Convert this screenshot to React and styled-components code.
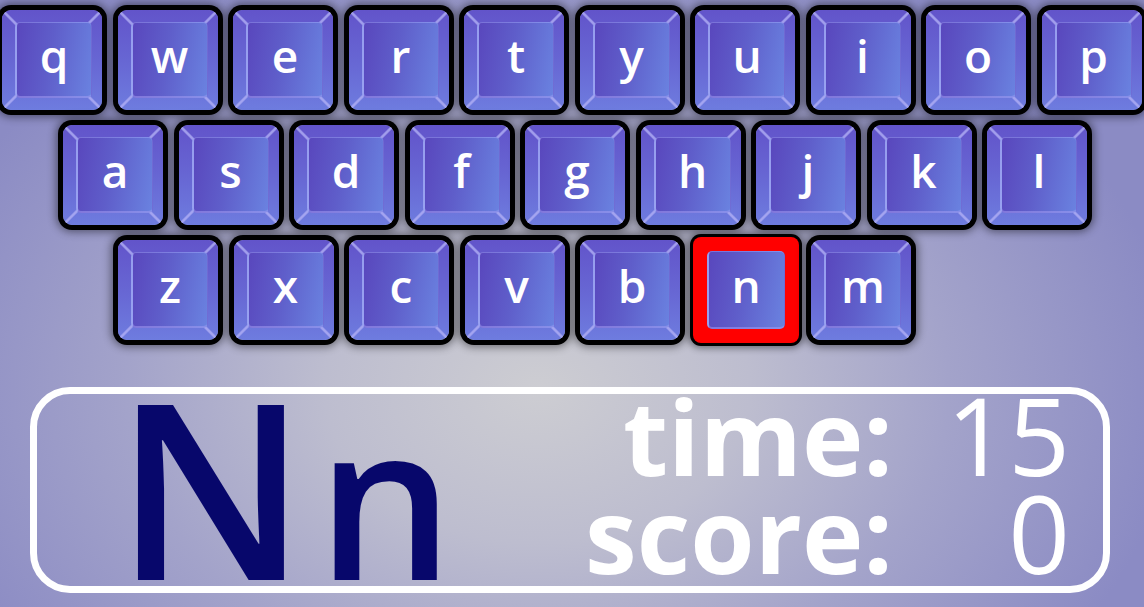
import styled, { createGlobalStyle } from "styled-components"

const GlobalStyle = createGlobalStyle`
    html, body {
        margin: 0;
        padding: 0;
    }
    body {
        width: 1144px;
        height: 607px;
        overflow: hidden;
        font-family: "Open Sans", "DejaVu Sans", sans-serif;
        background: radial-gradient(ellipse 62% 85% at 47% 64%, #cdcdd2 0%, #bdbdcf 30%, #a3a3ca 58%, #8b8bc4 90%);
    }
`

const rows = [
    { offset: 2, keys: ["q", "w", "e", "r", "t", "y", "u", "i", "o", "p"] },
    { offset: 63, keys: ["a", "s", "d", "f", "g", "h", "j", "k", "l"] },
    { offset: 118, keys: ["z", "x", "c", "v", "b", "n", "m"] },
]

const target = "n"

const App = () => {
    return (
        <Page>
            <GlobalStyle />
            <Keyboard>
                {rows.map((row, i) => (
                    <KeyRow key={i} $offset={row.offset}>
                        {row.keys.map(k => (
                            <Key key={k} $selected={k === target}>
                                <KeyFace>{k}</KeyFace>
                            </Key>
                        ))}
                    </KeyRow>
                ))}
            </Keyboard>
            <Panel>
                <BigLetters>
                    N<Small>n</Small>
                </BigLetters>
                <Stats>
                    <StatRow>
                        <Label>time:</Label>
                        <Value>15</Value>
                    </StatRow>
                    <StatRow>
                        <Label>score:</Label>
                        <Value>0</Value>
                    </StatRow>
                </Stats>
            </Panel>
        </Page>
    )
}

export default App

const Page = styled.div`
    width: 1144px;
    height: 607px;
    display: flex;
    flex-direction: column;
    overflow: hidden;
`

const Keyboard = styled.div`
    padding-top: 10px;
    display: flex;
    flex-direction: column;
    gap: 15px;
`

const KeyRow = styled.div`
    display: flex;
    gap: 15.5px;
    padding-left: ${p => p.$offset}px;
`

const diagonal = (deg) =>
    `linear-gradient(${deg}deg, transparent 48.6%, rgba(178, 176, 245, 0.8) 49.6%, rgba(178, 176, 245, 0.8) 50.4%, transparent 51.4%)`

const Key = styled.div`
    width: 100px;
    height: 100px;
    box-sizing: border-box;
    display: flex;
    border-radius: ${p => p.$selected ? "5px" : "9px"};
    padding: ${p => p.$selected ? "11px" : "12px 10px 12px 13px"};
    background: ${p => p.$selected
        ? "#ff0000"
        : `${diagonal(45)}, ${diagonal(-45)}, linear-gradient(180deg, #6254ca 0%, #6766d3 50%, #6e7cdf 100%)`};
    box-shadow: ${p => p.$selected
        ? "0 0 0 3px #ff0000, 0 0 0 6px #000, 0 0 7px 8px rgba(0, 0, 0, 0.45)"
        : "0 0 0 5px #000, 0 0 8px 7px rgba(0, 0, 0, 0.45)"};
`

const KeyFace = styled.div`
    flex: 1;
    display: flex;
    align-items: center;
    justify-content: center;
    border-radius: 5px;
    background: linear-gradient(100deg, #5947bd 0%, #5f5eca 45%, #6a82e0 100%);
    border-left: 2px solid rgba(190, 188, 255, 0.55);
    border-top: 1px solid rgba(170, 168, 250, 0.4);
    border-bottom: 2px solid rgba(170, 168, 250, 0.5);
    border-right: 1px solid rgba(140, 150, 240, 0.45);
    color: #fff;
    font-family: "Open Sans", sans-serif;
    font-weight: 600;
    font-size: 46px;
    line-height: 1;
    padding-bottom: 10px;
`

const Panel = styled.div`
    margin: 47px 0 0 30px;
    width: 1080px;
    height: 206px;
    flex-shrink: 0;
    box-sizing: border-box;
    border: 7px solid #fff;
    border-radius: 40px;
    display: flex;
    justify-content: space-between;
    align-items: flex-start;
    padding: 0 33px 0 78px;
`

const BigLetters = styled.div`
    font-family: "Open Sans", sans-serif;
    font-weight: 600;
    font-size: 245px;
    line-height: 182px;
    height: 186px;
    color: #07076b;
    letter-spacing: 10px;
`

const Small = styled.span`
    font-size: 215px;
    line-height: 0;
`

const Stats = styled.div`
    display: flex;
    flex-direction: column;
    color: #fff;
    margin-top: -8px;
`

const StatRow = styled.div`
    display: flex;
    align-items: baseline;
    height: 98px;
    line-height: 98px;
`

const Label = styled.div`
    width: 320px;
    text-align: right;
    font-family: "Open Sans", sans-serif;
    font-weight: 700;
    font-size: 104px;
`

const Value = styled.div`
    width: 177px;
    text-align: right;
    font-family: "Open Sans", sans-serif;
    font-weight: 500;
    font-size: 108px;
`
